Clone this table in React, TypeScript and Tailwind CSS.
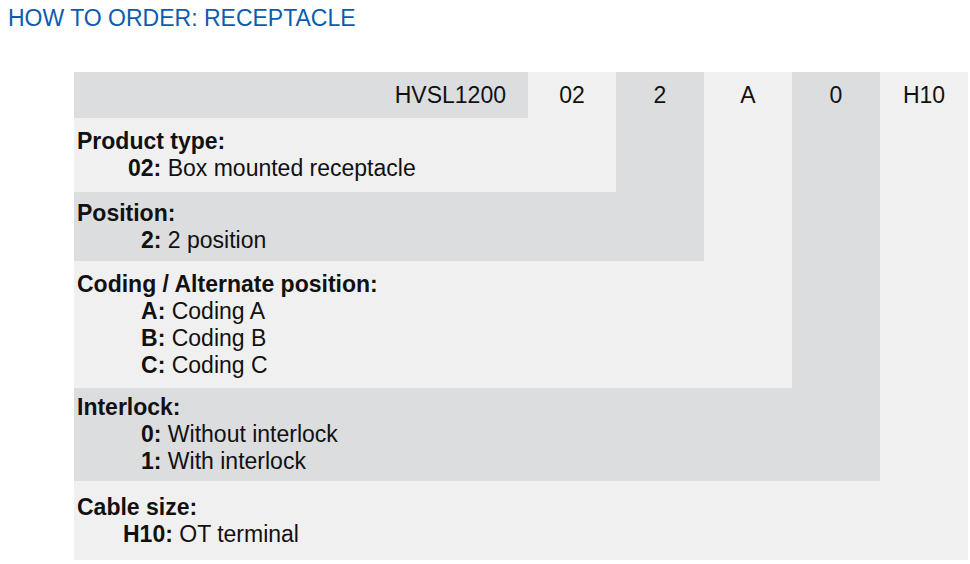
const dark = 'bg-[#dcdddf]';
const light = 'bg-[#f0f0f0]';

function Option({ code, label, indent }: { code: string; label: string; indent: string }) {
  return (
    <div className={indent}>
      <span className="font-bold">{code}:</span> {label}
    </div>
  );
}

function Section({
  title,
  className,
  indent,
  options,
}: {
  title: string;
  className: string;
  indent: string;
  options: [string, string][];
}) {
  return (
    <div className={`${className} flex flex-col justify-center pl-[3px] leading-[27px]`}>
      <div className="font-bold">{title}</div>
      {options.map(([code, label]) => (
        <Option key={code} code={code} label={label} indent={indent} />
      ))}
    </div>
  );
}

export default function App() {
  return (
    <div className="min-h-screen bg-white font-['Liberation_Sans',Arial,sans-serif] text-[23px] text-[#111]">
      <h2 className="pl-[8px] pt-[5px] text-[23px] leading-[26px] text-[#0b5cb0]">
        HOW TO ORDER: RECEPTACLE
      </h2>

      <div className="ml-[74px] mt-[41px] grid w-[894px] grid-cols-[454px_repeat(5,88px)] grid-rows-[46px_74px_69px_127px_93px_79px] leading-[27px]">
        <div className={`${dark} col-start-1 row-start-1 flex items-center justify-end pr-[22px]`}>HVSL1200</div>
        <div className={`${light} col-start-2 row-start-1 flex h-[46px] items-center justify-center`}>02</div>
        <div className={`${dark} col-start-3 row-start-1 row-span-2`}>
          <div className="flex h-[46px] items-center justify-center">2</div>
        </div>
        <div className={`${light} col-start-4 row-start-1 row-span-3`}>
          <div className="flex h-[46px] items-center justify-center">A</div>
        </div>
        <div className={`${dark} col-start-5 row-start-1 row-span-4`}>
          <div className="flex h-[46px] items-center justify-center">0</div>
        </div>
        <div className={`${light} col-start-6 row-start-1 row-span-5`}>
          <div className="flex h-[46px] items-center justify-center">H10</div>
        </div>

        <Section
          className={`${light} col-span-2 col-start-1 row-start-2`}
          title="Product type:"
          indent="pl-[51px]"
          options={[['02', 'Box mounted receptacle']]}
        />
        <Section
          className={`${dark} col-span-3 col-start-1 row-start-3`}
          title="Position:"
          indent="pl-[64px]"
          options={[['2', '2 position']]}
        />
        <Section
          className={`${light} col-span-4 col-start-1 row-start-4`}
          title="Coding / Alternate position:"
          indent="pl-[64px]"
          options={[
            ['A', 'Coding A'],
            ['B', 'Coding B'],
            ['C', 'Coding C'],
          ]}
        />
        <Section
          className={`${dark} col-span-5 col-start-1 row-start-5`}
          title="Interlock:"
          indent="pl-[64px]"
          options={[
            ['0', 'Without interlock'],
            ['1', 'With interlock'],
          ]}
        />
        <Section
          className={`${light} col-span-6 col-start-1 row-start-6`}
          title="Cable size:"
          indent="pl-[46px]"
          options={[['H10', 'OT terminal']]}
        />
      </div>
    </div>
  );
}
